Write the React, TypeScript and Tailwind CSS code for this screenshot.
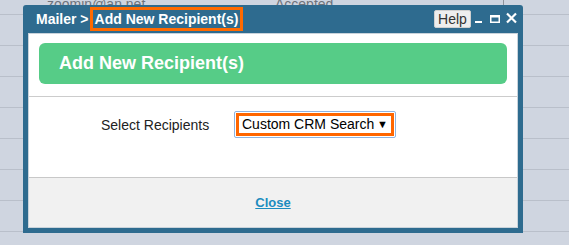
import React from 'react';

const rows = [
  { email: 'zoomin@an.net', status: 'Accepted', count: '1' },
  { email: '', status: '', count: '' },
  { email: '', status: '', count: '' },
  { email: '', status: '', count: '' },
  { email: '', status: '', count: '' },
  { email: '', status: '', count: '' },
  { email: '', status: '', count: '' },
  { email: '', status: '', count: '' },
  { email: 'ininbob@infor.net', status: 'Accepted', count: '0' },
];

const App = () => {
  return (
    <div
      className="relative w-[569px] h-[245px] overflow-hidden bg-[#cfd5e0]"
      style={{ fontFamily: '"Liberation Sans", Arial, sans-serif' }}
    >
      {/* table behind the overlay */}
      <div className="-mt-[16px]">
        {rows.map((row, i) => (
          <div
            key={i}
            className="flex h-[31px] items-center border-b border-[#b9bfca] text-[14px] text-[#6e737c]"
          >
            <div className={`w-[275px] pl-[47px] ${i === 0 ? 'pt-[10px]' : 'pt-[22px]'}`}>{row.email}</div>
            <div className={`w-[228px] ${i === 0 ? 'pt-[10px]' : 'pt-[22px]'}`}>{row.status}</div>
            <div className={`h-full border-l ${i === 0 ? 'border-[#8f949c]' : 'border-transparent'}`}></div>
            <div className={`-ml-[3px] ${i === 0 ? 'pt-[10px]' : 'pt-[22px]'}`}>{i === 0 ? '' : row.count}</div>
          </div>
        ))}
      </div>

      {/* dialog */}
      <div className="absolute left-[23px] top-[5px] w-[500px] h-[228px] bg-[#2e6b8f] rounded-t-[3px] flex flex-col">
        <div className="h-[28px] flex items-center pl-[13px] pr-[5px]">
          <span className="text-white font-bold text-[14px]">Mailer &gt;</span>
          <span className="ml-[1px] border-[3px] border-[#ff6a00] px-[2px] h-[24px] flex items-center text-white font-bold text-[14px]">
            Add New Recipient(s)
          </span>
          <div className="ml-auto flex items-center">
            <div className="h-[18px] w-[37px] flex items-center justify-center bg-[#eeeeee] border border-[#d0d0d0] rounded-[2px] text-[14px] text-[#333]">
              Help
            </div>
            <svg width="46" height="14" viewBox="0 0 46 14" className="ml-[1px]">
              <rect x="3" y="9" width="7" height="2" fill="#fff" />
              <rect x="18.75" y="3.75" width="8.5" height="6.5" fill="none" stroke="#fff" strokeWidth="1.5" />
              <rect x="18" y="3" width="10" height="2.5" fill="#fff" />
              <path d="M35 1.5 L44 10.5 M44 1.5 L35 10.5" stroke="#fff" strokeWidth="2.2" />
            </svg>
          </div>
        </div>

        <div className="mx-[5px] flex-1 bg-white border border-[#c9d3db] flex flex-col">
          <div className="px-[10px] pt-[9px] pb-[12px] border-b border-[#cccccc]">
            <div className="h-[41px] rounded-[6px] bg-[#56cc87] flex items-center pl-[20px] text-white font-bold text-[18px]">
              Add New Recipient(s)
            </div>
          </div>

          <div className="flex-1 flex items-start pt-[14px]">
            <div className="w-[205px] pl-[72px] pt-[4px] text-[14px] text-[#222]">Select Recipients</div>
            <div className="rounded-[2px] border border-[#8fb3e0] p-[1px]">
              <div className="w-[158px] h-[23px] border-[3px] border-[#ff6600] bg-white flex items-center pl-[3px] pr-[3px] text-[14px] text-black">
                <span>Custom CRM Search</span>
                <span className="ml-auto text-[11px]">▼</span>
              </div>
            </div>
          </div>

          <div className="h-[50px] bg-[#f1f1f1] border-t border-[#c8c8c8] flex items-center justify-center">
            <a href="#" className="text-[13px] font-bold text-[#1c8cbf] underline">Close</a>
          </div>
        </div>
        <div className="h-[5px]"></div>
      </div>
    </div>
  );
};

export default App;
